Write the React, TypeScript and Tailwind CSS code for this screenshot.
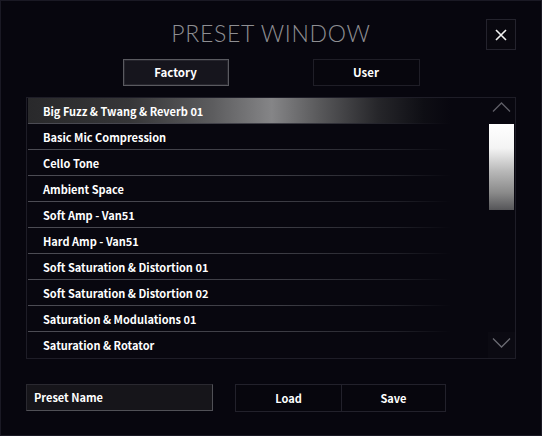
import React from "react";

const presets = [
  "Big Fuzz & Twang & Reverb 01",
  "Basic Mic Compression",
  "Cello Tone",
  "Ambient Space",
  "Soft Amp - Van51",
  "Hard Amp - Van51",
  "Soft Saturation & Distortion 01",
  "Soft Saturation & Distortion 02",
  "Saturation & Modulations 01",
  "Saturation & Rotator",
];

const listFont = { fontFamily: '"Noto Sans CJK JP", "Noto Sans", sans-serif' };

export default function App() {
  return (
    <div
      className="w-[542px] h-[436px] bg-[#07060e] border border-[#1a1924] flex flex-col px-[25px] pt-[18px] text-white"
      style={listFont}
    >
      {/* header */}
      <div className="grid grid-cols-[1fr_auto_1fr] items-center h-[31px]">
        <div />
        <div
          className="text-[23px] font-light tracking-[0.03em] text-[#8e8e92] leading-none pb-[2px]"
          style={{ fontFamily: '"Lato", "Open Sans", sans-serif' }}
        >
          PRESET WINDOW
        </div>
        <div className="flex justify-end">
          <button className="w-[30px] h-[31px] border border-[#24232d] bg-[#09080f] flex items-center justify-center">
            <svg width="12" height="12" viewBox="0 0 12 12">
              <path d="M1 1 L11 11 M11 1 L1 11" stroke="#f2f2f2" strokeWidth="1.6" />
            </svg>
          </button>
        </div>
      </div>

      {/* tabs */}
      <div className="flex justify-center gap-[84px] mt-[9px]">
        <button className="w-[106px] h-[27px] border border-[#5a5a60] bg-[#16151d] text-[11.5px] font-semibold text-white flex items-center justify-center shadow-[inset_0_0_0_1px_#26252d]">
          Factory
        </button>
        <button className="w-[107px] h-[27px] border border-[#1f1e27] bg-[#07060d] text-[11.5px] font-semibold text-white flex items-center justify-center">
          User
        </button>
      </div>

      {/* list */}
      <div className="mt-[11px] h-[262px] border border-[#1e1d27] bg-[#08070f] flex">
        <div className="flex-1 flex flex-col pl-[1px]">
          {presets.map((p, i) => (
            <div key={p} className="flex flex-col h-[26px]">
              <div
                className={
                  "h-[25px] flex items-center pl-[15px] pt-[1px] text-[11px] font-semibold text-white " +
                  (i === 0
                    ? "bg-[linear-gradient(to_right,#29292b_0%,#363638_22%,#5c5c5e_40%,#858587_53%,#5a5a5c_63%,#26262a_76%,#0e0e14_86%,transparent_92%)]"
                    : "")
                }
              >
                {p}
              </div>
              {i < presets.length - 1 && (
                <div className="h-px bg-[linear-gradient(to_right,#4c4c54_0%,#3c3c44_55%,#202028_80%,transparent_92%)]" />
              )}
            </div>
          ))}
        </div>
        <div className="w-[27px] flex flex-col items-center">
          <div className="h-[26px] w-full flex items-center justify-center pb-[8px]">
            <svg width="19" height="10" viewBox="0 0 19 10">
              <polyline points="1,9.5 9.5,1 18,9.5" fill="none" stroke="#5e5e66" strokeWidth="1.3" />
            </svg>
          </div>
          <div className="w-[25px] h-[86px] bg-[linear-gradient(to_bottom,#ffffff_0%,#f4f4f4_28%,#b8b8b8_55%,#8a8a8a_80%,#555558_100%)]" />
          <div className="flex-1" />
          <div className="h-[26px] w-full bg-[#0b0a12] flex items-center justify-center pb-[4px]">
            <svg width="19" height="10" viewBox="0 0 19 10">
              <polyline points="1,0.5 9.5,9 18,0.5" fill="none" stroke="#6a6a72" strokeWidth="1.3" />
            </svg>
          </div>
        </div>
      </div>

      {/* bottom */}
      <div className="mt-[25px] flex items-start">
        <div className="w-[187px] h-[27px] bg-[#16151a] border border-[#2a2930] border-r-[#505056] border-b-[#505056] flex items-center pl-[7px] text-[11px] font-semibold text-white">
          Preset Name
        </div>
        <div className="ml-[22px] flex">
          <button className="w-[107px] h-[28px] border border-[#22212b] bg-[#07060d] text-[11px] font-semibold text-white flex items-center justify-center">
            Load
          </button>
          <button className="w-[104px] h-[28px] border border-[#22212b] border-l-0 bg-[#07060d] text-[11px] font-semibold text-white flex items-center justify-center">
            Save
          </button>
        </div>
      </div>
    </div>
  );
}
